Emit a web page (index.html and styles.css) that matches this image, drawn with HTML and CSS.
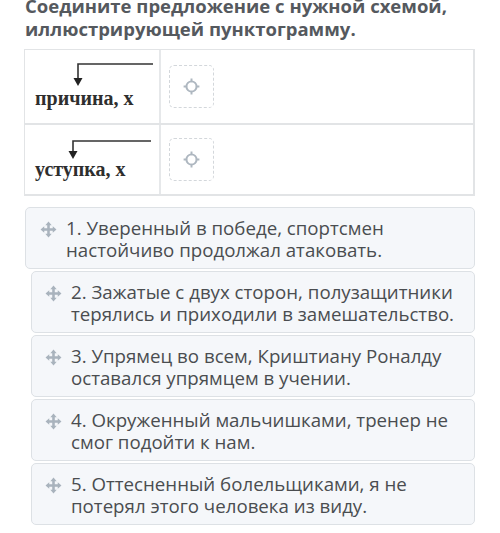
FILE: index.html
```html
<!DOCTYPE html>
<html lang="ru">
<head>
<meta charset="utf-8">
<link rel="stylesheet" href="styles.css">
</head>
<body>
<div class="page">
  <h1 class="title">Соедините предложение с нужной схемой, иллюстрирующей пунктограмму.</h1>

  <div class="match-table">
    <div class="row row-1">
      <div class="scheme">
        <svg class="arrow" width="134" height="38" viewBox="0 0 134 38">
          <path d="M128 14 H53 V29" fill="none" stroke="#333" stroke-width="1.6"/>
          <path d="M48.5 28 L57.5 28 L53 36 Z" fill="#222"/>
        </svg>
        <div class="scheme-text">причина, х</div>
      </div>
      <div class="drop">
        <div class="slot">
          <svg width="17" height="17" viewBox="0 0 14 14" class="target">
            <circle cx="7" cy="7" r="4.2" fill="none" stroke="#aeb7c0" stroke-width="1.6"/>
            <path d="M7 0.5 V3.5 M7 10.5 V13.5 M0.5 7 H3.5 M10.5 7 H13.5" stroke="#aeb7c0" stroke-width="1.6"/>
          </svg>
        </div>
      </div>
    </div>
    <div class="row row-2">
      <div class="scheme">
        <svg class="arrow" width="134" height="34" viewBox="0 0 134 34">
          <path d="M126 16 H48 V27" fill="none" stroke="#333" stroke-width="1.6"/>
          <path d="M43.5 26 L52.5 26 L48 34 Z" fill="#222"/>
        </svg>
        <div class="scheme-text">уступка, х</div>
      </div>
      <div class="drop">
        <div class="slot">
          <svg width="17" height="17" viewBox="0 0 14 14" class="target">
            <circle cx="7" cy="7" r="4.2" fill="none" stroke="#aeb7c0" stroke-width="1.6"/>
            <path d="M7 0.5 V3.5 M7 10.5 V13.5 M0.5 7 H3.5 M10.5 7 H13.5" stroke="#aeb7c0" stroke-width="1.6"/>
          </svg>
        </div>
      </div>
    </div>
  </div>

  <div class="cards">
    <div class="card card-first">
      <svg class="move" width="17" height="17" viewBox="0 0 16 16"><path d="M8 0.5 L11 4 H9.2 V6.8 H12 V5 L15.5 8 L12 11 V9.2 H9.2 V12 H11 L8 15.5 L5 12 H6.8 V9.2 H4 V11 L0.5 8 L4 5 V6.8 H6.8 V4 H5 Z" fill="#a9b3bd"/></svg>
      <p class="card-text">1. Уверенный в победе, спортсмен настойчиво продолжал атаковать.</p>
    </div>
    <div class="card">
      <svg class="move" width="17" height="17" viewBox="0 0 16 16"><path d="M8 0.5 L11 4 H9.2 V6.8 H12 V5 L15.5 8 L12 11 V9.2 H9.2 V12 H11 L8 15.5 L5 12 H6.8 V9.2 H4 V11 L0.5 8 L4 5 V6.8 H6.8 V4 H5 Z" fill="#a9b3bd"/></svg>
      <p class="card-text">2. Зажатые с двух сторон, полузащитники терялись и приходили в замешательство.</p>
    </div>
    <div class="card">
      <svg class="move" width="17" height="17" viewBox="0 0 16 16"><path d="M8 0.5 L11 4 H9.2 V6.8 H12 V5 L15.5 8 L12 11 V9.2 H9.2 V12 H11 L8 15.5 L5 12 H6.8 V9.2 H4 V11 L0.5 8 L4 5 V6.8 H6.8 V4 H5 Z" fill="#a9b3bd"/></svg>
      <p class="card-text">3. Упрямец во всем, Криштиану Роналду оставался упрямцем в учении.</p>
    </div>
    <div class="card">
      <svg class="move" width="17" height="17" viewBox="0 0 16 16"><path d="M8 0.5 L11 4 H9.2 V6.8 H12 V5 L15.5 8 L12 11 V9.2 H9.2 V12 H11 L8 15.5 L5 12 H6.8 V9.2 H4 V11 L0.5 8 L4 5 V6.8 H6.8 V4 H5 Z" fill="#a9b3bd"/></svg>
      <p class="card-text">4. Окруженный мальчишками, тренер не смог подойти к нам.</p>
    </div>
    <div class="card">
      <svg class="move" width="17" height="17" viewBox="0 0 16 16"><path d="M8 0.5 L11 4 H9.2 V6.8 H12 V5 L15.5 8 L12 11 V9.2 H9.2 V12 H11 L8 15.5 L5 12 H6.8 V9.2 H4 V11 L0.5 8 L4 5 V6.8 H6.8 V4 H5 Z" fill="#a9b3bd"/></svg>
      <p class="card-text">5. Оттесненный болельщиками, я не потерял этого человека из виду.</p>
    </div>
  </div>
</div>
</body>
</html>
```

FILE: styles.css
```css
html, body {
  margin: 0;
  padding: 0;
  background: #ffffff;
}

body {
  font-family: "Open Sans", "Noto Sans", sans-serif;
  overflow: hidden;
}

.page {
  width: 451px;
  margin-left: 24px;
}

.title {
  margin: -6px 0 0 1px;
  font-size: 18.5px;
  line-height: 23px;
  font-weight: 700;
  color: #55595e;
  padding-bottom: 9px;
}

.match-table {
  border: 1px solid #e2e4e6;
  border-bottom-width: 2px;
  border-right-width: 2px;
}

.row {
  display: flex;
}

.row-1 {
  height: 73px;
  border-bottom: 2px solid #e2e4e6;
}

.row-2 {
  height: 69px;
}

.scheme {
  width: 134px;
  border-right: 2px solid #e6e8ea;
  display: flex;
  flex-direction: column;
}

.arrow {
  display: block;
}

.scheme-text {
  font-family: "Liberation Serif", "DejaVu Serif", serif;
  font-size: 20px;
  line-height: 20px;
  font-weight: 700;
  color: #2e2e2e;
  padding-left: 10px;
}

.drop {
  flex: 1;
  display: flex;
  align-items: center;
  padding-left: 8px;
}

.slot {
  width: 43px;
  height: 41px;
  border: 1px dashed #d3d7db;
  border-radius: 5px;
  display: flex;
  align-items: center;
  justify-content: center;
}

.cards {
  margin-top: 11px;
  display: flex;
  flex-direction: column;
  gap: 2px;
}

.card {
  display: flex;
  align-items: flex-start;
  margin-left: 7px;
  background: #f5f7fa;
  border: 1px solid #dde1e5;
  border-radius: 5px;
  padding: 9px 8px 6px 13px;
  height: 62px;
  box-sizing: border-box;
  gap: 9px;
}

.card-first {
  margin-left: 1px;
  padding-left: 14px;
}

.move {
  flex: none;
  margin-top: 4px;
}

.card-text {
  margin: 0;
  font-size: 18.7px;
  line-height: 22px;
  color: #4a4d50;
}
```
